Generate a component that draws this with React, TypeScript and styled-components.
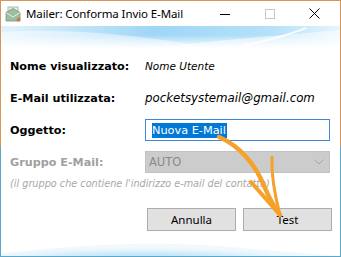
import React from "react";
import styled, { createGlobalStyle } from "styled-components";

const GlobalStyle = createGlobalStyle`
  html, body {
    margin: 0;
    padding: 0;
    background: #ffffff;
  }
  * {
    box-sizing: border-box;
  }
`;

const App = () => {
  return (
    <>
      <GlobalStyle />
      <StWindow>
        <StTitleBar>
          <StAppIcon viewBox="0 0 16 16">
            <rect x="3" y="1" width="10" height="8" fill="#e8ece8" stroke="#9aa89c" strokeWidth="0.8" />
            <path d="M1 6.5 L8 2.5 L15 6.5 L15 15 L1 15 Z" fill="#9dbf9f" stroke="#78967c" strokeWidth="0.8" />
            <path d="M1.5 7 L8 11 L14.5 7" fill="none" stroke="#e6eee6" strokeWidth="1" />
            <circle cx="13.5" cy="13.5" r="2" fill="#c97a55" />
          </StAppIcon>
          <StTitle>Mailer: Conforma Invio E-Mail</StTitle>
          <StControls>
            <StControl>
              <svg width="10" height="10" viewBox="0 0 10 10">
                <line x1="0" y1="5.5" x2="10" y2="5.5" stroke="#000" strokeWidth="1" />
              </svg>
            </StControl>
            <StControl>
              <svg width="10" height="10" viewBox="0 0 10 10">
                <rect x="0.5" y="0.5" width="9" height="9" fill="none" stroke="#c8c8c8" strokeWidth="1" />
              </svg>
            </StControl>
            <StControl>
              <svg width="11" height="11" viewBox="0 0 11 11">
                <path d="M0.5 0.5 L10.5 10.5 M10.5 0.5 L0.5 10.5" stroke="#000" strokeWidth="1" />
              </svg>
            </StControl>
          </StControls>
        </StTitleBar>

        <StBody>
          <StHeaderWave viewBox="0 0 339 22" preserveAspectRatio="none">
            <defs>
              <linearGradient id="hw" x1="0" y1="0" x2="1" y2="0">
                <stop offset="0" stopColor="#e2f2fc" />
                <stop offset="0.45" stopColor="#9fd6f6" />
                <stop offset="0.8" stopColor="#b5e1f9" />
                <stop offset="1" stopColor="#e6f5fd" />
              </linearGradient>
              <linearGradient id="hf" x1="0" y1="0" x2="0" y2="1">
                <stop offset="0" stopColor="#ffffff" stopOpacity="0" />
                <stop offset="1" stopColor="#ffffff" stopOpacity="1" />
              </linearGradient>
            </defs>
            <rect x="0" y="0" width="339" height="22" fill="url(#hw)" />
            <path d="M0 6 C 60 2, 130 8, 200 20 L 0 22 Z" fill="#ffffff" opacity="0.45" />
            <path d="M150 22 C 220 14, 270 10, 339 4 L 339 22 Z" fill="#ffffff" opacity="0.5" />
            <path d="M240 20 C 270 14, 290 8, 305 2" stroke="#ffffff" strokeWidth="2" fill="none" opacity="0.8" />
            <rect x="0" y="9" width="339" height="13" fill="url(#hf)" />
          </StHeaderWave>

          <StForm>
            <StLabel>Nome visualizzato:</StLabel>
            <StValue $size={10.5}>Nome Utente</StValue>

            <StLabel>E-Mail utilizzata:</StLabel>
            <StValue $size={11.8}>pocketsystemail@gmail.com</StValue>

            <StLabel>Oggetto:</StLabel>
            <StTextBox>
              <StSelected>Nuova E-Mail</StSelected>
            </StTextBox>

            <StLabel $disabled>Gruppo E-Mail:</StLabel>
            <StSelect>
              <span>AUTO</span>
              <svg width="10" height="6" viewBox="0 0 10 6">
                <path d="M0.5 0.5 L5 5 L9.5 0.5" fill="none" stroke="#a8a8a8" strokeWidth="1" />
              </svg>
            </StSelect>
          </StForm>

          <StHint>(il gruppo che contiene l'indirizzo e-mail del contatto)</StHint>

          <StButtons>
            <StButton>Annulla</StButton>
            <StButton>Test</StButton>
          </StButtons>

          <StFooterWave viewBox="0 0 339 22" preserveAspectRatio="none">
            <defs>
              <radialGradient id="fw" cx="0.42" cy="1.1" r="0.55">
                <stop offset="0" stopColor="#86c9ec" />
                <stop offset="0.5" stopColor="#c4e6f8" />
                <stop offset="1" stopColor="#ffffff" stopOpacity="0" />
              </radialGradient>
            </defs>
            <rect x="0" y="0" width="339" height="22" fill="#ffffff" />
            <rect x="0" y="0" width="339" height="22" fill="url(#fw)" />
            <path d="M0 20 C 80 10, 160 6, 240 14 L 339 22 L 0 22 Z" fill="#e4f3fb" opacity="0.5" />
          </StFooterWave>
        </StBody>

        <StArrow viewBox="0 0 341 257">
          <path
            d="M219 137 C 240 146, 256 165, 265 188 C 270 200, 275 208, 280 215"
            fill="none"
            stroke="#f5a12c"
            strokeWidth="4.5"
            strokeLinecap="round"
          />
          <path d="M251 182 L 280 215" stroke="#f5a12c" strokeWidth="4" strokeLinecap="round" />
          <path d="M272 157 C 271 180, 276 200, 280 215" fill="none" stroke="#f5a12c" strokeWidth="3" strokeLinecap="round" />
        </StArrow>
      </StWindow>
    </>
  );
};

export default App;

const StWindow = styled.div`
  position: relative;
  width: 341px;
  height: 257px;
  display: flex;
  flex-direction: column;
  border: 1px solid transparent;
  background:
    linear-gradient(#ffffff, #ffffff) padding-box,
    linear-gradient(to bottom, #d8955a 0%, #d8955a 56%, #5aa9cc 58%, #5aa9cc 100%) border-box;
  overflow: hidden;
`;

const StTitleBar = styled.div`
  display: flex;
  align-items: center;
  height: 25px;
  flex-shrink: 0;
  padding-left: 4px;
  background: #ffffff;
`;

const StAppIcon = styled.svg`
  width: 16px;
  height: 16px;
  margin-right: 5px;
`;

const StTitle = styled.span`
  flex: 1;
  font-family: "Noto Sans", "Open Sans", sans-serif;
  font-size: 11.5px;
  color: #000000;
  letter-spacing: -0.1px;
`;

const StControls = styled.div`
  display: flex;
  align-items: center;
  height: 100%;
  margin-right: 3px;
`;

const StControl = styled.div`
  width: 45px;
  height: 100%;
  display: flex;
  align-items: center;
  justify-content: center;
`;

const StBody = styled.div`
  flex: 1;
  display: flex;
  flex-direction: column;
  background: #ffffff;
`;

const StHeaderWave = styled.svg`
  display: block;
  width: 339px;
  height: 22px;
  flex-shrink: 0;
`;

const StForm = styled.div`
  display: grid;
  grid-template-columns: 135px 185px;
  grid-auto-rows: 22px;
  row-gap: 10px;
  align-items: center;
  padding: 7px 0 0 9px;
`;

const StLabel = styled.span<{ $disabled?: boolean }>`
  font-family: "DejaVu Sans", Verdana, sans-serif;
  font-weight: bold;
  font-size: 11.2px;
  color: ${({ $disabled }) => ($disabled ? "#a0a0a0" : "#000000")};
`;

const StValue = styled.span<{ $size: number }>`
  font-family: "DejaVu Sans", Verdana, sans-serif;
  font-style: italic;
  font-size: ${({ $size }) => $size}px;
  color: #000000;
  white-space: nowrap;
`;

const StTextBox = styled.div`
  height: 22px;
  border: 1px solid #3f86d8;
  background: #ffffff;
  display: flex;
  align-items: center;
  padding-left: 6px;
`;

const StSelected = styled.span`
  font-family: "DejaVu Sans", Verdana, sans-serif;
  font-size: 11.3px;
  line-height: 15px;
  background: #0078d7;
  color: #ffffff;
  padding-right: 1px;
`;

const StSelect = styled.div`
  height: 22px;
  border: 1px solid #c2c2c2;
  background: #cccccc;
  display: flex;
  align-items: center;
  justify-content: space-between;
  padding: 0 5px 0 3px;
  font-family: "DejaVu Sans", Verdana, sans-serif;
  font-size: 11.5px;
  color: #8a8a8a;
`;

const StHint = styled.div`
  margin: 5px 0 0 9px;
  font-family: "DejaVu Sans", Verdana, sans-serif;
  font-style: italic;
  font-size: 9.7px;
  color: #a8a8a8;
  white-space: nowrap;
`;

const StButtons = styled.div`
  display: flex;
  justify-content: flex-end;
  gap: 7px;
  margin-top: 19px;
  padding-right: 8px;
`;

const StButton = styled.button`
  width: 89px;
  height: 23px;
  border: 1px solid #adadad;
  background: #e1e1e1;
  font-family: "Noto Sans", "Open Sans", sans-serif;
  font-size: 11.5px;
  color: #000000;
  padding: 0;
`;

const StFooterWave = styled.svg`
  display: block;
  width: 339px;
  height: 22px;
  margin-top: auto;
`;

const StArrow = styled.svg`
  position: absolute;
  left: -1px;
  top: -1px;
  width: 341px;
  height: 257px;
  pointer-events: none;
`;
